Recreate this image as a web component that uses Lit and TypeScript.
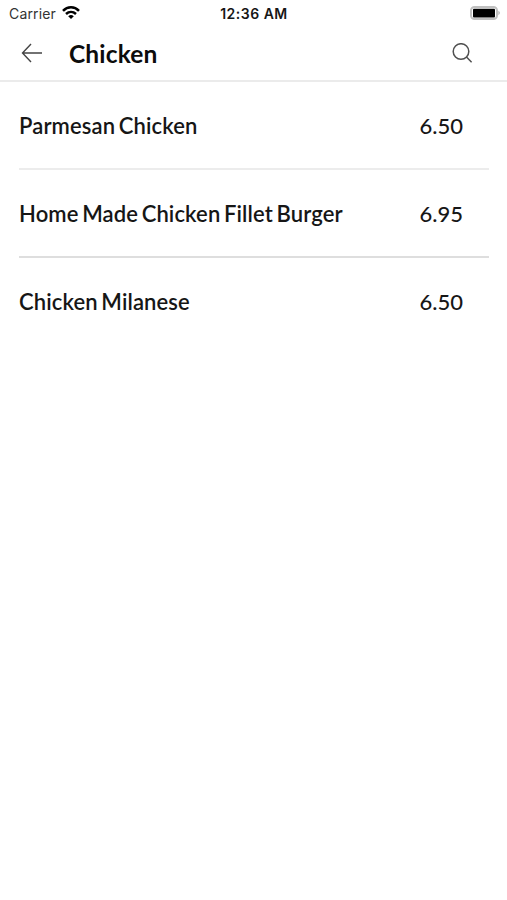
import { LitElement, html, css } from "lit";
import { customElement } from "lit/decorators.js";

interface Dish { name: string; price: string; }
const dishes: Dish[] = [
  { name: "Parmesan Chicken", price: "6.50" },
  { name: "Home Made Chicken Fillet Burger", price: "6.95" },
  { name: "Chicken Milanese", price: "6.50" },
];

@customElement("app-root")
export class AppRoot extends LitElement {
  static styles = css`
    :host { display: block; height: 900px; background: #fff; color: #161616; font-family: Lato, sans-serif; overflow: hidden; }
    .status { display: grid; grid-template-columns: 1fr auto 1fr; align-items: center; height: 27px; padding: 0 6px 0 9px; font: 14px/27px Inter, sans-serif; }
    .carrier { display: flex; align-items: center; gap: 6px; letter-spacing: 0.15px; color: #333; }
    .time { font-weight: 600; letter-spacing: 0.5px; margin-right: 2px; }
    .battery { justify-self: end; margin-bottom: 1px; }
    .wifi { margin-bottom: 2px; }
    svg { display: block; }
    .bar { display: flex; align-items: center; height: 52px; padding: 0 34px 1px 21px; border-bottom: 2px solid #ebebeb; }
    h1 { flex: 1; margin: 2px 0 0 26px; font-size: 24.5px; line-height: 30px; letter-spacing: 0.15px; font-weight: 700; color: #0c0c0c; }
    .list { padding: 0 18px 0 19px; }
    .row { display: flex; align-items: center; justify-content: space-between; height: 86px; padding-right: 26px; border-bottom: 2px solid #ececec; font-size: 22px; }
    .row:nth-child(2) { border-color: #dedede; }
    .row:last-child { border: 0; }
    .name { font-weight: 600; letter-spacing: 0.12px; word-spacing: -2px; }
    .price { font-weight: 500; }
  `;
  render() {
    return html`
      <div class="status">
        <div class="carrier"><span>Carrier</span>
          <svg class="wifi" width="18" height="13" viewBox="0 0 18 13" fill="none" stroke="#000" stroke-width="2.5"><path d="M1 4.8C5.5.2 12.5.2 17 4.8M4 8C7 5.2 11 5.2 14 8"/><path d="M9 13L6.2 10.2Q9 8 11.8 10.2Z" fill="#000" stroke="none"/></svg>
        </div>
        <span class="time">12:36 AM</span>
        <svg class="battery" width="31" height="14" viewBox="0 0 31 14"><rect x="1" y="1" width="26" height="12" rx="3.5" fill="none" stroke="#c0c0c0" stroke-width="2"/><rect x="3" y="2.7" width="22" height="8.8" rx="1" fill="#000"/><path d="M28.4 4.8Q31.4 7 28.4 9.2Z" fill="#b5b5b5"/></svg>
      </div>
      <header class="bar">
        <svg width="22" height="20" viewBox="0 0 22 20" fill="none" stroke="#444" stroke-width="1.4"><path d="M21 10H1.5M10 1L1.5 10L10 19"/></svg>
        <h1>Chicken</h1>
        <svg width="21" height="21" viewBox="0 0 21 21" fill="none" stroke="#505050" stroke-width="1.5"><circle cx="9" cy="8.5" r="7.8"/><path d="M14.5 14L19.6 19.2"/></svg>
      </header>
      <main class="list">${dishes.map(d => html`<div class="row"><span class="name">${d.name}</span><span class="price">${d.price}</span></div>`)}</main>
    `;
  }
}
